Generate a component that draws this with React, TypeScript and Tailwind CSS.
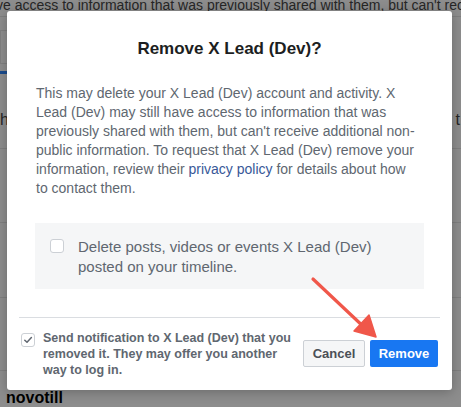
import React from 'react';

const font = { fontFamily: '"Liberation Sans", Arial, sans-serif' };

function Arrow() {
    return (
        <svg className="absolute left-0 top-0 pointer-events-none" width="461" height="407" viewBox="0 0 461 407">
            <line x1="313" y1="279" x2="366" y2="329" stroke="#f0574a" strokeWidth="3.2" strokeLinecap="round" />
            <polygon points="376,337 354,331 369,315" fill="#f0574a" stroke="#f0574a" strokeWidth="1.5" strokeLinejoin="round" />
        </svg>
    );
}

export default function App() {
    return (
        <div className="relative w-[461px] h-[407px] overflow-hidden bg-[#8d8d8d]" style={font}>
            {/* page behind the overlay */}
            <div className="flex flex-col">
                <div className="h-[17px] border-b border-[#7f7f7f] -ml-[4px] text-[14px] leading-[10px] text-[#262626] whitespace-nowrap">
                    ve access to information that was previously shared with them, but can't receive
                </div>
                <div className="h-[54px] flex items-start">
                    <div className="mt-[13px] h-[34px] w-[30px] border border-[#7f7f7f] pl-[10px] pt-[8px] text-[14px] text-[#262626]">1</div>
                </div>
                <div className="h-[3px] w-[10px] bg-[#1a4b8c]" />
                <div className="h-[75px] border-b border-[#7f7f7f] text-[16px] text-[#262626] pt-[34px] flex justify-between">
                    <span>h</span><span className="pr-[1px]">t</span>
                </div>
                <div className="h-[74px] border-b border-[#7f7f7f]" />
                <div className="h-[75px] border-b border-[#7f7f7f]" />
                <div className="h-[73px] border-b border-[#7f7f7f]" />
                <div className="pl-[6px] pt-[17px] text-[16px] font-bold text-black leading-[20px]">novotill</div>
            </div>

            {/* dialog */}
            <div className="absolute left-[7px] top-[11px] w-[445px] h-[379px] bg-white rounded-[3px] shadow-[0_2px_12px_rgba(0,0,0,0.25)] flex flex-col">
                <h2 className="pt-[28px] text-center text-[17px] leading-[20px] font-bold text-[#1c1e21]">
                    Remove X Lead (Dev)?
                </h2>
                <div className="mt-[25px] px-[29px] whitespace-nowrap text-[14px] leading-[19px] text-[#606770]">
                    <div>This may delete your X Lead (Dev) account and activity. X</div>
                    <div>Lead (Dev) may still have access to information that was</div>
                    <div>previously shared with them, but can't receive additional non-</div>
                    <div>public information. To request that X Lead (Dev) remove your</div>
                    <div>
                        information, review their <span className="text-[#385898]">privacy policy</span> for details about how
                    </div>
                    <div>to contact them.</div>
                </div>
                <div className="mt-[25px] mx-[28px] h-[66px] bg-[#f5f6f7] flex items-start pl-[15px] pt-[14px] gap-[14px]">
                    <div className="mt-[2px] w-[14px] h-[14px] shrink-0 rounded-[3px] border border-[#ccd0d5] bg-white" />
                    <div className="text-[15px] leading-[20px] text-[#606770]">
                        <div>Delete posts, videos or events X Lead (Dev)</div>
                        <div>posted on your timeline.</div>
                    </div>
                </div>
                <div className="mt-[28px] mx-[12px] h-px bg-[#dadde1]" />
                <div className="flex items-start pl-[14px] pr-[14px] pt-[12px]">
                    <div className="mt-[3px] w-[14px] h-[14px] shrink-0 rounded-[3px] border border-[#ccd0d5] bg-white flex items-center justify-center">
                        <svg width="10" height="10" viewBox="0 0 10 10">
                            <path d="M1.8 5.2 L4 7.3 L8.4 2.6" fill="none" stroke="#606770" strokeWidth="1.5" strokeLinecap="round" strokeLinejoin="round" />
                        </svg>
                    </div>
                    <div className="ml-[8px] whitespace-nowrap text-[12.5px] leading-[16px] font-bold text-[#606770]">
                        <div>Send notification to X Lead (Dev) that you</div>
                        <div>removed it. They may offer you another</div>
                        <div>way to log in.</div>
                    </div>
                    <div className="ml-auto mt-[10px] flex gap-[5px]">
                        <button className="h-[27px] w-[62px] rounded-[2px] border border-[#ccd0d5] bg-[#f5f6f7] text-[13px] font-bold text-[#4b4f56]">
                            Cancel
                        </button>
                        <button className="h-[27px] w-[68px] rounded-[2px] bg-[#1877f2] text-[13px] font-bold text-white">
                            Remove
                        </button>
                    </div>
                </div>
            </div>

            <Arrow />
        </div>
    );
}
